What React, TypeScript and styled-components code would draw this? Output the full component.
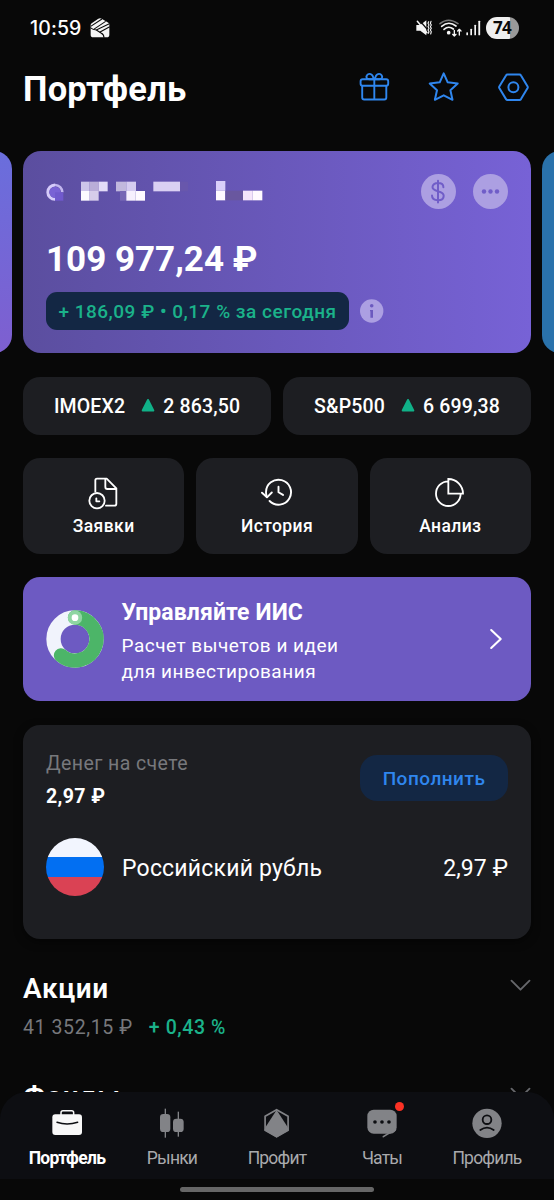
import React from "react";
import styled, { createGlobalStyle, css } from "styled-components";

const color = {
  bg: "#080808",
  panel: "#1d1e22",
  violet: "#6d5ac2",
  navy: "#132744",
  blue: "#2f86ee",
  green: "#1bb28a",
  muted: "#77787c",
  veil: "#ac9fe2",
};

const GlobalStyle = createGlobalStyle`
  *, *::before, *::after { box-sizing: border-box; }
  body {
    margin: 0;
    background: ${color.bg};
    color: #fff;
    font-family: Roboto, "Liberation Sans", sans-serif;
  }
  svg { display: block; flex: none; }
`;

const Screen = styled.div`
  position: relative;
  width: 554px;
  height: 1200px;
  overflow: hidden;
  background: ${color.bg};
`;

/* ---------- status bar ---------- */

const StatusBar = styled.header`
  display: flex;
  align-items: center;
  height: 56px;
  padding: 0 35px 0 30px;
`;

const Clock = styled.span`
  width: 60px;
  font: 500 19.5px/24px Inter, sans-serif;
  letter-spacing: 0.1px;
`;

const StatusIcons = styled.div`
  display: flex;
  align-items: center;
  margin-left: auto;
`;

const WifiSlot = styled.div`
  margin: 0 4.5px 0 6.5px;
`;

const Battery = styled.span`
  width: 33px;
  height: 22px;
  margin-left: 5px;
  padding-right: 1px;
  border-radius: 11px;
  background: linear-gradient(90deg, #efefef 74%, #999 74%);
  color: #0a0a0a;
  font: 700 17px/22px "Open Sans", sans-serif;
  letter-spacing: -0.7px;
  text-align: center;
`;

/* ---------- page header ---------- */

const TitleBar = styled.div`
  display: flex;
  align-items: center;
  justify-content: space-between;
  height: 62px;
  padding: 0 24px 0 23px;
`;

const Title = styled.h1`
  margin: 4px 0 0;
  font-size: 34.5px;
  line-height: 40px;
  font-weight: 700;
  letter-spacing: 0.25px;
`;

const TitleActions = styled.div`
  display: flex;
  gap: 38px;
`;

/* ---------- account carousel ---------- */

const Carousel = styled.section`
  display: flex;
  justify-content: center;
  gap: 11px;
  margin-top: 33px;
`;

const AccountCard = styled.article<{ $fill: string }>`
  flex: none;
  width: 508px;
  height: 201.5px;
  padding: 23px 23px 22px;
  border-radius: 18px;
  background: ${(p) => p.$fill};
`;

const AccountTop = styled.div`
  display: flex;
  align-items: center;
  gap: 17px;
  height: 35px;
`;

const HiddenName = styled.div`
  flex: 1;
`;

const Amount = styled.div`
  margin-top: 31px;
  font-size: 35px;
  line-height: 40px;
  font-weight: 700;
`;

const AccountBottom = styled.div`
  display: flex;
  align-items: center;
  gap: 11px;
  margin-top: 12px;
`;

const ChangePill = styled.span`
  width: 303px;
  height: 38px;
  border-radius: 11px;
  background: ${color.navy};
  color: ${color.green};
  font-size: 19px;
  line-height: 39.5px;
  font-weight: 500;
  letter-spacing: 0.5px;
  text-align: center;
  white-space: nowrap;
`;

/* ---------- tiles ---------- */

const TileRow = styled.section<{ $columns: number }>`
  display: grid;
  grid-template-columns: repeat(${(p) => p.$columns}, 1fr);
  gap: 12px;
  margin: ${(p) => (p.$columns === 2 ? "24px" : "23.5px")} 23px 0;
`;

const tile = css`
  border-radius: 17px;
  background: ${color.panel};
`;

const Ticker = styled.div`
  ${tile}
  display: flex;
  align-items: center;
  justify-content: center;
  height: 58px;
  padding-top: 1px;
  font-size: 19.5px;
  font-weight: 500;
  letter-spacing: 0.15px;
`;

const TickerArrow = styled.svg`
  margin: 0 8px 0 16px;
`;

const Action = styled.button`
  ${tile}
  display: flex;
  flex-direction: column;
  align-items: center;
  height: 96px;
  padding: 18px 0 0;
  border: 0;
  color: #fff;
  font: 500 17.5px/24px Roboto, sans-serif;
  letter-spacing: 0.4px;
`;

const ActionLabel = styled.span`
  margin-top: 4px;
`;

/* ---------- IIS banner ---------- */

const Banner = styled.section`
  display: flex;
  align-items: center;
  height: 124px;
  margin: 23px 23px 0;
  padding: 0 28px 0 23px;
  border-radius: 17px;
  background: ${color.violet};
`;

const BannerText = styled.div`
  flex: 1;
  margin-left: 17.5px;
`;

const BannerTitle = styled.h2`
  margin: 5px 0 6px;
  font-size: 23px;
  line-height: 28px;
  font-weight: 700;
  letter-spacing: 0.1px;
`;

const BannerNote = styled.p`
  margin: 0;
  font-size: 19px;
  line-height: 26px;
  letter-spacing: 0.5px;
`;

/* ---------- cash ---------- */

const Cash = styled.section`
  height: 213.5px;
  margin: 24px 23px 0;
  padding: 24px 23px 0;
  border-radius: 17px;
  background: ${color.panel};
  box-shadow: 0 3px 8px rgba(0, 0, 0, 0.5);
`;

const CashHead = styled.div`
  display: flex;
  justify-content: space-between;
  height: 89px;
`;

const CashLabel = styled.div`
  padding-top: 0.5px;
  color: ${color.muted};
  font-size: 19.5px;
  line-height: 28px;
  letter-spacing: 0.4px;
`;

const CashTotal = styled.div`
  margin-top: 5px;
  font-size: 19.5px;
  line-height: 28px;
  font-weight: 700;
  letter-spacing: 0.4px;
`;

const TopUp = styled.button`
  width: 148px;
  height: 46px;
  margin-top: 6px;
  padding: 0;
  border: 0;
  border-radius: 17px;
  background: ${color.navy};
  color: ${color.blue};
  font: 500 19px/47px Roboto, sans-serif;
  letter-spacing: 0.5px;
`;

const Currency = styled.div`
  display: flex;
  align-items: center;
  gap: 18px;
  height: 58px;
  font-size: 23px;
  line-height: 61px;
  letter-spacing: 0.2px;
`;

const CurrencyName = styled.span`
  flex: 1;
`;

const CurrencySum = styled.span`
  letter-spacing: 0.1px;
`;

const Flag = styled.span`
  width: 58px;
  height: 58px;
  border-radius: 50%;
  background: linear-gradient(#f2f5fe 33%, #026ff2 33% 67.5%, #da4254 67.5%);
`;

const CurrencyText = styled.div`
  display: flex;
  flex: 1;
  padding-top: 2px;
`;

/* ---------- holdings ---------- */

const Group = styled.section`
  display: flex;
  justify-content: space-between;
  height: 108.5px;
  padding: 0 23px;
`;

const Groups = styled.div`
  margin-top: 31px;
`;

const GroupTitle = styled.h2`
  margin: 0;
  font-size: 28px;
  line-height: 38px;
  font-weight: 600;
  letter-spacing: 0.6px;
`;

const GroupSums = styled.div`
  display: flex;
  gap: 16px;
  margin-top: 7px;
  color: ${color.muted};
  font-size: 19.5px;
  line-height: 26px;
  letter-spacing: 0.6px;
`;

const Gain = styled.span`
  color: ${color.green};
  font-weight: 500;
`;

const ChevronDown = styled.svg`
  margin-top: 9px;
`;

/* ---------- bottom navigation ---------- */

const Dock = styled.footer`
  position: absolute;
  left: 0;
  right: 0;
  bottom: 0;
  height: 108px;
  background: ${color.bg};
`;

const Tabs = styled.nav`
  display: grid;
  grid-template-columns: repeat(5, 105px);
  justify-content: center;
  height: 87px;
  border-radius: 27px 27px 0 0;
  background: #0d0e12;
`;

const Tab = styled.a<{ $active?: boolean }>`
  display: flex;
  flex-direction: column;
  align-items: center;
  padding-top: 16px;
  color: ${(p) => (p.$active ? "#fff" : "#a9aaad")};
  font-size: 17.5px;
  line-height: 24px;
  font-weight: ${(p) => (p.$active ? 700 : 400)};
  letter-spacing: ${(p) => (p.$active ? "-0.65px" : "-0.8px")};
`;

const TabIcon = styled.span`
  position: relative;
  height: 36px;
  margin-bottom: 2px;
  color: ${(p) => p.color};
`;

const Unread = styled.i`
  position: absolute;
  top: -6.5px;
  right: -6px;
  width: 9.5px;
  height: 9.5px;
  border-radius: 50%;
  background: #fb3124;
`;

const HomeBar = styled.div`
  width: 194px;
  height: 5px;
  margin: 8px auto 0;
  border-radius: 3px;
  background: #666;
`;

/* ---------- icons ---------- */

const line = (w: number) => ({
  fill: "none",
  stroke: "currentColor",
  strokeWidth: w,
  strokeLinecap: "round" as const,
  strokeLinejoin: "round" as const,
});

const CubeIcon = () => (
  <svg width="20" height="20" viewBox="0 0 60 60">
    <path d="M2 21 Q2 18 5 16 L25 2 Q30 -1 35 2 L55 14 Q58 16 58 19 L58 50 Q58 58 50 58 L10 58 Q2 58 2 50Z" fill="#f5f5f5" />
    <g fill="none" stroke={color.bg} strokeWidth="3.200">
      <path d="M2 25 L36 3" />
      <path d="M11 34 L47 10" />
      <path d="M1 29 Q9 36 19 36 L58 17" />
      <path d="M19 36 L33 45 Q42 49 42 59" />
      <path d="M29 43 L59 26" />
    </g>
  </svg>
);

const MuteIcon = () => (
  <svg width="16" height="16" viewBox="418 61 48 48" color="#f5f5f5">
    <path d="M419 76h12l18-14v45l-18-14h-12z" fill="currentColor" />
    <path d="M425 58L457 95" stroke={color.bg} strokeWidth="4" />
    <path d="M422 65L451 99" {...line(4.5)} />
    <path d="M456 66l-2 5 3 5-3 5 3 5-3 5 3 5-2 5M463 65l-2 6 3 5-3 5 3 5-3 5 3 5-2 7" {...line(3.4)} />
  </svg>
);

const WifiIcon = () => (
  <svg width="23" height="18" viewBox="485 56 69 54" color="#f5f5f5">
    <path d="M488 70Q513 49 542 70" {...line(4.5)} stroke="#777" />
    <path d="M493 78Q514 60 536 77M500 87Q514 75 528 86" {...line(5)} />
    <circle cx="514" cy="97" r="5.500" fill="currentColor" />
    <path d="M531 90v17m-5-5 5 5 5-5M546 104V87m-5 5 5-5 5 5" {...line(4)} />
  </svg>
);

const SignalIcon = () => (
  <svg width="15" height="16" viewBox="568 60 45 48" fill="#f5f5f5">
    <rect x="569" y="97" width="5" height="9" rx="2" />
    <rect x="581" y="86" width="5" height="20" rx="2" />
    <rect x="593" y="74" width="5" height="32" rx="2" />
    <rect x="605" y="62" width="5.500" height="44" rx="2" />
  </svg>
);

const GiftIcon = () => (
  <svg width="32" height="32" viewBox="0 0 32 32" color={color.blue}>
    <g {...line(1.9)}>
      <rect x="2.600" y="8.200" width="27.600" height="6.600" rx="2" />
      <path d="M4.200 15v11.500a2 2 0 0 0 2 2h20.100a2 2 0 0 0 2-2V15M16.300 8.500v20" />
      <path d="M15.600 8.200H11.200C8.300 8.200 8 5.800 8.800 4.600 10.500 1.900 15 2 15.600 8.200ZM17 8.200h4.400c2.900 0 3.200-2.400 2.400-3.600C22.100 1.900 17.600 2 17 8.200Z" />
    </g>
  </svg>
);

const StarIcon = () => (
  <svg width="32" height="32" viewBox="0 0 32 32" color={color.blue}>
    <path
      d="M15.700 2.300 19.700 11.300 29.700 12.600 22.400 19.300 24.500 28.800 15.700 24.300 6.900 28.800 9 19.300 1.700 12.600 11.700 11.300Z"
      {...line(2)}
    />
  </svg>
);

const HexIcon = () => (
  <svg width="32" height="32" viewBox="0 0 32 32" color={color.blue}>
    <path d="M9.500 3.500H21.500Q22.500 3.500 23 4.400L29.600 15.400Q30 16.200 29.600 17L23 28.100Q22.500 28.900 21.500 28.900H9.500Q8.500 28.900 8 28.100L1.300 17Q0.900 16.200 1.300 15.400L8 4.400Q8.500 3.500 9.500 3.500Z" {...line(2)} />
    <circle cx="15.400" cy="16.200" r="5" {...line(2)} />
  </svg>
);

const mosaic: [number, number, number, string][] = [
  [243, 125, 26, "#cdc6ea"], [269, 125, 27, "#b9add8"], [296, 125, 27, "#e3dcf8"],
  [243, 153, 26, "#fcfbff"], [269, 153, 27, "#d6cdea"],
  [348, 125, 31, "#c1b8dd"], [379, 125, 29, "#d5ccf0"],
  [360, 153, 19, "#7767b5"], [379, 153, 28, "#f7f0fe"], [407, 153, 28, "#fffaff"],
  [460, 125, 80, "#dad0f3"], [540, 125, 24, "#6857ac"],
  [648, 123, 28, "#d9cffa"], [648, 152, 28, "#fffaff"],
  [676, 152, 53, "#69579f"], [729, 152, 29, "#f5e5fb"], [758, 152, 29, "#fffaff"],
];

const MaskedName = () => (
  <svg width="222" height="22" viewBox="138 123 666 66">
    <path d="M165 135 A21 21 0 1 0 165 178" fill="none" stroke="#d5cbfa" strokeWidth="9" />
    <path d="M165 135 A22 22 0 0 1 187 157" fill="none" stroke="#c2b6ef" strokeWidth="8" />
    <circle cx="165" cy="157" r="17" fill="#7962d5" />
    <rect x="165" y="157" width="25" height="25" fill="#7059cd" />
    {mosaic.map(([x, y, w, fill]) => (
      <rect key={`${x}-${y}`} x={x} y={y} width={w} height="29" fill={fill} />
    ))}
  </svg>
);

const DollarIcon = () => (
  <svg width="35" height="35" viewBox="0 0 35 35" color="#705dc8">
    <circle cx="17.500" cy="17.500" r="17.500" fill={color.veil} />
    <path
      d="M17 6.700V28.600M22.400 13.300C22.400 10.700 20.300 9 17.100 9 13.800 9 11.500 10.600 11.500 13.100 11.500 18.900 22.700 15.500 22.700 21.800 22.700 24.700 20.500 26.300 17 26.300 13.400 26.300 11 24.600 11 21.600"
      {...line(2)}
    />
  </svg>
);

const MoreIcon = () => (
  <svg width="35" height="35" viewBox="0 0 35 35">
    <circle cx="17.500" cy="17.500" r="17.500" fill={color.veil} />
    {[11, 17.500, 24].map((x) => (
      <circle key={x} cx={x} cy="17.500" r="2.200" fill="#705dc8" />
    ))}
  </svg>
);

const InfoIcon = () => (
  <svg width="24" height="24" viewBox="0 0 24 24">
    <circle cx="11.700" cy="12" r="11.700" fill={color.veil} />
    <circle cx="11.700" cy="6.800" r="1.800" fill="#6b59bf" />
    <path d="M10 11H13V18.800H10.400V12.300H10Z" fill="#6b59bf" />
  </svg>
);

const UpArrow = () => (
  <TickerArrow width="14" height="14" viewBox="0 0 14 14">
    <path d="M7 1 12.300 11.500H1.700Z" fill="#10b188" stroke="#10b188" strokeWidth="2" strokeLinejoin="round" />
  </TickerArrow>
);

const OrdersIcon = () => (
  <svg width="32" height="34" viewBox="263 333 96 102">
    <g {...line(5.5)}>
      <path d="M285 380V346Q285 341 290 341H319L348 370V416Q348 422 342 422H317" />
      <path d="M315 342V366Q315 372 321 372H347" />
      <circle cx="290" cy="407" r="23" />
      <path d="M288 400V409H297" />
    </g>
  </svg>
);

const HistoryIcon = () => (
  <svg width="32" height="34" viewBox="0 0 32 34">
    <g {...line(1.900)}>
      <path d="M5.800 21Q5 18.500 5 16.300A12.500 12.500 0 1 1 8.600 25" />
      <path d="M1 16.700 6 21.300 10.800 16.500" />
      <path d="M17.500 10.700V16.300L22 18.900" />
    </g>
  </svg>
);

const AnalysisIcon = () => (
  <svg width="32" height="34" viewBox="471 333 96 102">
    <path d="M514 349A37 37 0 1 0 551 386M514 342V386H558A44 44 0 0 0 514 342Z" {...line(5.5)} strokeLinejoin="miter" />
  </svg>
);

const Donut = () => (
  <svg width="58" height="58" viewBox="0 0 174 174">
    <circle cx="87" cy="87" r="64.500" fill="none" stroke="#f1f3fc" strokeWidth="43" />
    <path d="M87 22.500A64.500 64.500 0 1 1 45 136" fill="none" stroke="#4cb568" strokeWidth="43" strokeLinecap="round" />
    <circle cx="87" cy="23" r="21.500" fill="#8fd5a2" />
    <circle cx="87" cy="23" r="10" fill="#fff" />
  </svg>
);

const ChevronRight = () => (
  <svg width="14" height="22" viewBox="0 0 14 22">
    <path d="M2.200 2 11.700 11 2.200 20" {...line(2.1)} />
  </svg>
);

const Expand = () => (
  <ChevronDown width="21" height="13" viewBox="0 0 21 13" color="#66676b">
    <path d="M1.500 1.700 10.500 10.700 19.500 1.700" {...line(1.900)} />
  </ChevronDown>
);

const CaseIcon = () => (
  <svg width="32" height="32" viewBox="153 475 96 96">
    <path d="M183 496V489Q183 483 189 483H215Q221 483 221 489V496" {...line(4.500)} />
    <rect x="157" y="494" width="89" height="62" rx="9" fill="currentColor" />
    <path d="M171 518Q201 528 233 518" {...line(4.500)} stroke="#0d0e12" />
  </svg>
);

const CandlesIcon = () => (
  <svg width="32" height="32" viewBox="468 475 96 96" fill="currentColor">
    <rect x="494" y="477" width="4" height="87" />
    <rect x="533" y="486" width="4" height="75" />
    <rect x="480" y="493" width="31" height="54" rx="10" />
    <rect x="519" y="507" width="32" height="40" rx="10" />
  </svg>
);

const ProfitIcon = () => (
  <svg width="32" height="32" viewBox="0 0 32 32">
    <path d="M15.600 1.700 27.100 8.300V22.300L15.600 28.800 4.100 22.300V8.300Z" {...line(1.700)} />
    <path d="M15.600 2 26.600 19 27.900 22.300 15.600 29.500 3.300 22.300 4.600 19Z" fill="currentColor" />
  </svg>
);

const ChatIcon = () => (
  <svg width="32" height="32" viewBox="266 475 96 96">
    <rect x="270" y="480" width="88" height="72" rx="19" fill="currentColor" />
    <path d="M354 540Q336 549 318 561" {...line(5)} />
    {[293, 314, 335].map((x) => (
      <circle key={x} cx={x} cy="517" r="5.500" fill="#0d0e12" />
    ))}
  </svg>
);

const ProfileIcon = () => (
  <svg width="32" height="32" viewBox="581 475 96 96">
    <circle cx="629" cy="521" r="44" fill="currentColor" />
    <circle cx="629" cy="510" r="13" fill="none" stroke="#0d0e12" strokeWidth="5.500" />
    <path d="M609 541Q629 527 649 541" {...line(5.500)} stroke="#0d0e12" />
  </svg>
);

/* ---------- data ---------- */

const tickers = [
  { name: "IMOEX2", value: "2 863,50" },
  { name: "S&P500", value: "6 699,38" },
];

const actions = [
  { label: "Заявки", Icon: OrdersIcon },
  { label: "История", Icon: HistoryIcon },
  { label: "Анализ", Icon: AnalysisIcon },
];

const groups = [
  { title: "Акции", sum: "41 352,15 ₽", gain: "+ 0,43 %" },
  { title: "Фонды", sum: "", gain: "" },
];

const tabs = [
  { label: "Портфель", Icon: CaseIcon, active: true },
  { label: "Рынки", Icon: CandlesIcon },
  { label: "Профит", Icon: ProfitIcon },
  { label: "Чаты", Icon: ChatIcon, unread: true },
  { label: "Профиль", Icon: ProfileIcon },
];

export default function App() {
  return (
    <>
      <GlobalStyle />
      <Screen>
        <StatusBar>
          <Clock>10:59</Clock>
          <CubeIcon />
          <StatusIcons>
            <MuteIcon />
            <WifiSlot>
              <WifiIcon />
            </WifiSlot>
            <SignalIcon />
            <Battery>74</Battery>
          </StatusIcons>
        </StatusBar>

        <TitleBar>
          <Title>Портфель</Title>
          <TitleActions>
            <GiftIcon />
            <StarIcon />
            <HexIcon />
          </TitleActions>
        </TitleBar>

        <Carousel>
          <AccountCard $fill="linear-gradient(#6a6edc, #7e5fd0)" />
          <AccountCard $fill="linear-gradient(90deg, #5b4e9f, #7762d6)">
            <AccountTop>
              <HiddenName>
                <MaskedName />
              </HiddenName>
              <DollarIcon />
              <MoreIcon />
            </AccountTop>
            <Amount>109 977,24 ₽</Amount>
            <AccountBottom>
              <ChangePill>+ 186,09 ₽ • 0,17 % за сегодня</ChangePill>
              <InfoIcon />
            </AccountBottom>
          </AccountCard>
          <AccountCard $fill="#2a72ab" />
        </Carousel>

        <TileRow $columns={2}>
          {tickers.map((t) => (
            <Ticker key={t.name}>
              {t.name}
              <UpArrow />
              {t.value}
            </Ticker>
          ))}
        </TileRow>

        <TileRow $columns={3}>
          {actions.map(({ label, Icon }) => (
            <Action key={label}>
              <Icon />
              <ActionLabel>{label}</ActionLabel>
            </Action>
          ))}
        </TileRow>

        <Banner>
          <Donut />
          <BannerText>
            <BannerTitle>Управляйте ИИС</BannerTitle>
            <BannerNote>
              Расчет вычетов и идеи
              <br />
              для инвестирования
            </BannerNote>
          </BannerText>
          <ChevronRight />
        </Banner>

        <Cash>
          <CashHead>
            <div>
              <CashLabel>Денег на счете</CashLabel>
              <CashTotal>2,97 ₽</CashTotal>
            </div>
            <TopUp>Пополнить</TopUp>
          </CashHead>
          <Currency>
            <Flag />
            <CurrencyText>
              <CurrencyName>Российский рубль</CurrencyName>
              <CurrencySum>2,97 ₽</CurrencySum>
            </CurrencyText>
          </Currency>
        </Cash>

        <Groups>
          {groups.map((g) => (
            <Group key={g.title}>
              <div>
                <GroupTitle>{g.title}</GroupTitle>
                <GroupSums>
                  <span>{g.sum}</span>
                  <Gain>{g.gain}</Gain>
                </GroupSums>
              </div>
              <Expand />
            </Group>
          ))}
        </Groups>

        <Dock>
          <Tabs>
            {tabs.map(({ label, Icon, active, unread }) => (
              <Tab key={label} $active={active}>
                <TabIcon color={active ? "#f8f8f8" : "#828387"}>
                  <Icon />
                  {unread && <Unread />}
                </TabIcon>
                {label}
              </Tab>
            ))}
          </Tabs>
          <HomeBar />
        </Dock>
      </Screen>
    </>
  );
}
